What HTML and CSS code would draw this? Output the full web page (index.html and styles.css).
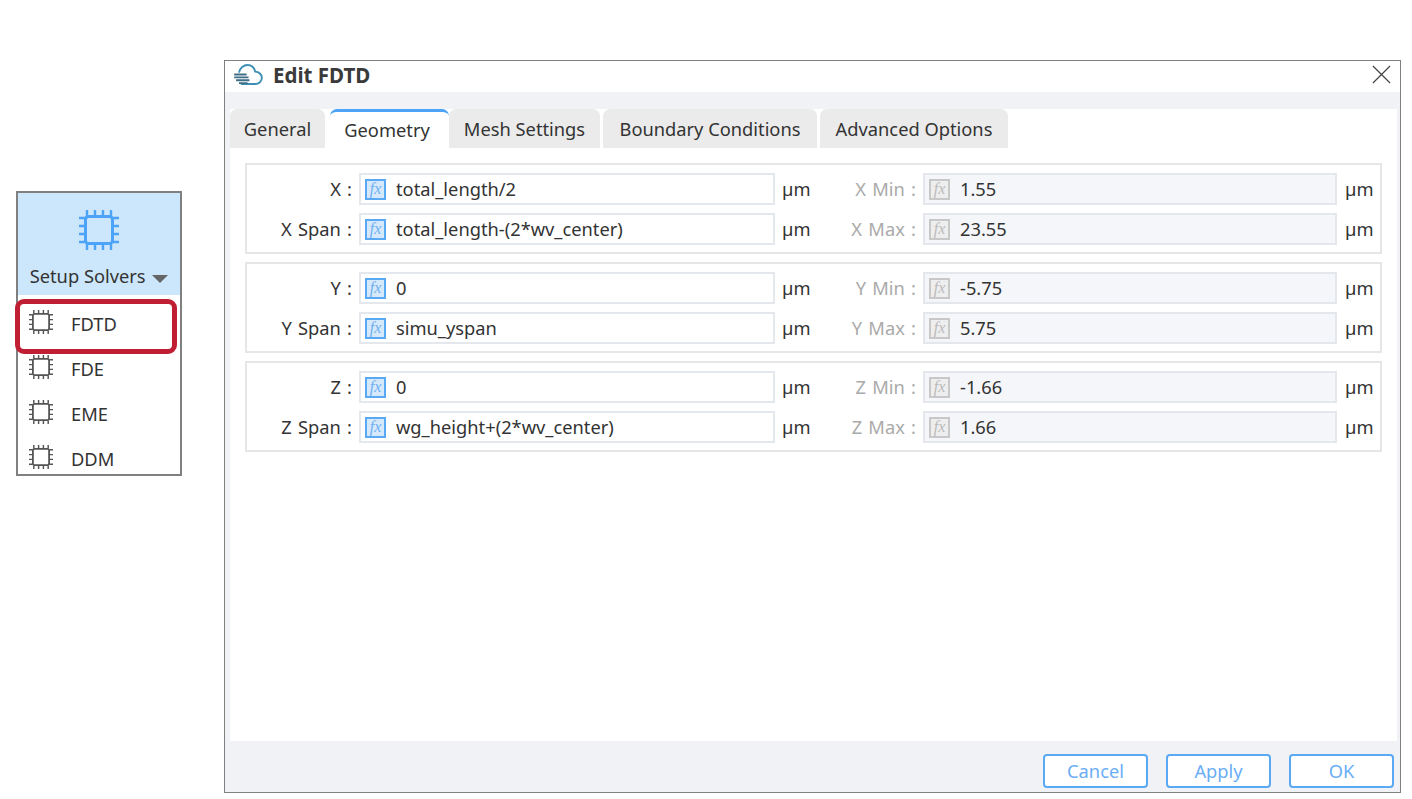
FILE: index.html
```html
<!DOCTYPE html>
<html lang="en">
<head>
    <meta charset="UTF-8">
    <title>Edit FDTD</title>
    <link rel="stylesheet" href="styles.css">
</head>
<body>
    <svg class="defs" width="0" height="0">
        <symbol id="chip" viewBox="0 0 40 40">
            <rect x="6.5" y="6.5" width="27" height="27" rx="3" fill="none" stroke="currentColor" stroke-width="3"/>
            <path d="M8 0v6M16 0v6M24 0v6M32 0v6M8 34v6M16 34v6M24 34v6M32 34v6M0 8h6M0 16h6M0 24h6M0 32h6M34 8h6M34 16h6M34 24h6M34 32h6" fill="none" stroke="currentColor" stroke-width="2.4"/>
        </symbol>
    </svg>

    <!-- Solver menu -->
    <div class="solver-panel">
        <div class="solver-head">
            <svg class="chip-big"><use href="#chip"/></svg>
            <div class="solver-title">Setup Solvers <span class="caret"></span></div>
        </div>
        <div class="solver-list">
            <div class="solver-item"><svg class="chip-small"><use href="#chip"/></svg>FDTD</div>
            <div class="solver-item"><svg class="chip-small"><use href="#chip"/></svg>FDE</div>
            <div class="solver-item"><svg class="chip-small"><use href="#chip"/></svg>EME</div>
            <div class="solver-item"><svg class="chip-small"><use href="#chip"/></svg>DDM</div>
        </div>
        <div class="highlight"></div>
    </div>

    <!-- Edit dialog -->
    <div class="dialog">
        <div class="title-bar">
            <svg class="cloud" viewBox="0 0 32 22">
                <path d="M6 9C7 4 11 1 15 1c4 0 7 3 8 7 4 0 7 3 7 6.500 0 3.500-3 6.500-7 6.500H8" fill="none" stroke="#3d8fb5" stroke-width="2"/>
                <path d="M1 11h13M1 14h15M3 17h14M6 20h9" fill="none" stroke="#3f6f86" stroke-width="2"/>
            </svg>
            <span class="title">Edit FDTD</span>
            <svg class="close" viewBox="0 0 20 20">
                <path d="M1 1l18 18M19 1L1 19" fill="none" stroke="#444" stroke-width="1.300"/>
            </svg>
        </div>
        <div class="band"></div>
        <div class="panel">
            <div class="tabs">
                <div class="tab tab-general">General</div>
                <div class="tab tab-active">Geometry</div>
                <div class="tab tab-mesh">Mesh Settings</div>
                <div class="tab tab-boundary">Boundary Conditions</div>
                <div class="tab tab-advanced">Advanced Options</div>
            </div>

            <div class="group">
                <label class="lbl">X :</label>
                <div class="field"><span class="fx">fx</span>total_length/2</div>
                <span class="unit">µm</span>
                <label class="lbl off">X Min :</label>
                <div class="field field-off"><span class="fx fx-off">fx</span>1.55</div>
                <span class="unit">µm</span>

                <label class="lbl">X Span :</label>
                <div class="field"><span class="fx">fx</span>total_length-(2*wv_center)</div>
                <span class="unit">µm</span>
                <label class="lbl off">X Max :</label>
                <div class="field field-off"><span class="fx fx-off">fx</span>23.55</div>
                <span class="unit">µm</span>
            </div>

            <div class="group">
                <label class="lbl">Y :</label>
                <div class="field"><span class="fx">fx</span>0</div>
                <span class="unit">µm</span>
                <label class="lbl off">Y Min :</label>
                <div class="field field-off"><span class="fx fx-off">fx</span>-5.75</div>
                <span class="unit">µm</span>

                <label class="lbl">Y Span :</label>
                <div class="field"><span class="fx">fx</span>simu_yspan</div>
                <span class="unit">µm</span>
                <label class="lbl off">Y Max :</label>
                <div class="field field-off"><span class="fx fx-off">fx</span>5.75</div>
                <span class="unit">µm</span>
            </div>

            <div class="group">
                <label class="lbl">Z :</label>
                <div class="field"><span class="fx">fx</span>0</div>
                <span class="unit">µm</span>
                <label class="lbl off">Z Min :</label>
                <div class="field field-off"><span class="fx fx-off">fx</span>-1.66</div>
                <span class="unit">µm</span>

                <label class="lbl">Z Span :</label>
                <div class="field"><span class="fx">fx</span>wg_height+(2*wv_center)</div>
                <span class="unit">µm</span>
                <label class="lbl off">Z Max :</label>
                <div class="field field-off"><span class="fx fx-off">fx</span>1.66</div>
                <span class="unit">µm</span>
            </div>
        </div>
        <div class="footer">
            <button class="btn">Cancel</button>
            <button class="btn">Apply</button>
            <button class="btn">OK</button>
        </div>
    </div>
</body>
</html>
```

FILE: styles.css
```css
* {
    box-sizing: border-box;
}

body {
    margin: 0;
    height: 799px;
    overflow: hidden;
    background-color: #fff;
    color: #333;
    font-family: "Noto Sans", "Liberation Sans", sans-serif;
    font-size: 18.3px;
    display: flex;
    align-items: flex-start;
}

.defs {
    position: absolute;
}

/* Solver menu */
.solver-panel {
    position: relative;
    width: 166px;
    height: 285px;
    margin: 191px 0 0 16px;
    border: 2px solid #808080;
    flex-shrink: 0;
}

.solver-head {
    height: 102px;
    background-color: #cce6fb;
    display: flex;
    flex-direction: column;
    align-items: center;
    padding-top: 17px;
}

.chip-big {
    width: 40px;
    height: 40px;
    color: #4da3f8;
}

.solver-title {
    margin-top: 14px;
    line-height: 24px;
    white-space: nowrap;
}

.caret {
    display: inline-block;
    margin-left: 2px;
    border-left: 8px solid transparent;
    border-right: 8px solid transparent;
    border-top: 8px solid #666;
}

.solver-list {
    height: 179px;
    padding-top: 7px;
    overflow: hidden;
}

.solver-item {
    height: 45px;
    display: flex;
    align-items: center;
    padding: 0 0 2px 11px;
    flex-shrink: 0;
}

.chip-small {
    width: 24px;
    height: 24px;
    color: #555;
    margin-right: 18px;
    margin-bottom: 3px;
}

.highlight {
    position: absolute;
    left: -3px;
    top: 106px;
    width: 162px;
    height: 55px;
    border: 5px solid #c01f33;
    border-radius: 9px;
}

/* Dialog */
.dialog {
    width: 1177px;
    height: 733px;
    margin: 60px 0 0 42px;
    border: 1px solid #808080;
    background-color: #f0f2f5;
    display: flex;
    flex-direction: column;
    flex-shrink: 0;
}

.title-bar {
    height: 31px;
    background-color: #fff;
    display: flex;
    align-items: center;
    padding: 0 9px 4px 8px;
}

.cloud {
    width: 31px;
    height: 21px;
    margin-right: 9px;
}

.title {
    font-size: 20.5px;
    font-weight: 700;
    color: #3a3a3a;
}

.close {
    width: 19px;
    height: 19px;
    margin-left: auto;
}

.band {
    height: 17px;
}

.panel {
    height: 632px;
    margin: 0 3px 0 5px;
    background-color: #fff;
}

.tabs {
    display: flex;
    height: 39px;
    margin-bottom: 15px;
}

.tab {
    background-color: #ebebeb;
    border-radius: 7px 7px 0 0;
    display: flex;
    align-items: center;
    justify-content: center;
    white-space: nowrap;
}

.tab-general {
    width: 95px;
    margin-right: 5px;
}

.tab-active {
    width: 119px;
    background-color: #fff;
    border-top: 3px solid #4da3f8;
    padding: 0 5px 2px 0;
}

.tab-mesh {
    width: 151px;
    margin-right: 3px;
}

.tab-boundary {
    width: 214px;
    margin-right: 3px;
}

.tab-advanced {
    width: 188px;
}

.group {
    width: 1137px;
    margin: 0 0 8px 15px;
    border: 2px solid #e6e6e6;
    padding: 8px 0 7px;
    display: grid;
    grid-template-columns: 105px 416px 60px 67px 414px 1fr;
    grid-auto-rows: 32px;
    column-gap: 7px;
    row-gap: 8px;
    align-items: center;
}

.lbl {
    padding-bottom: 2px;
    text-align: right;
    white-space: nowrap;
    word-spacing: 1.5px;
}

.off {
    color: #aaa;
}

.field {
    height: 32px;
    border: 2px solid #e4e7ec;
    display: flex;
    align-items: center;
    padding: 0 0 2px 4px;
    white-space: nowrap;
}

.field-off {
    background-color: #f4f6f9;
}

.field-off + .unit {
    margin-left: 1px;
}

.fx {
    width: 21px;
    height: 21px;
    margin: 2px 10px 0 0;
    border: 2px solid #5aa9f5;
    background-color: #d6e9fb;
    color: #6fb0f0;
    font-family: "Liberation Serif", serif;
    font-style: italic;
    font-size: 16px;
    line-height: 15px;
    text-align: center;
}

.fx-off {
    border-color: #c8c8c8;
    background-color: #eee;
    color: #bbb;
}

.unit {
    padding-bottom: 2px;
    white-space: nowrap;
}

.footer {
    flex: 1;
    display: flex;
    justify-content: flex-end;
    gap: 18px;
    padding: 13px 6px 0 0;
}

.btn {
    width: 105px;
    height: 34px;
    padding: 0 0 2px;
    background-color: #fff;
    border: 2px solid #5aa9f5;
    border-radius: 4px;
    color: #6aaef5;
    font-family: inherit;
    font-size: 18.3px;
}
```
